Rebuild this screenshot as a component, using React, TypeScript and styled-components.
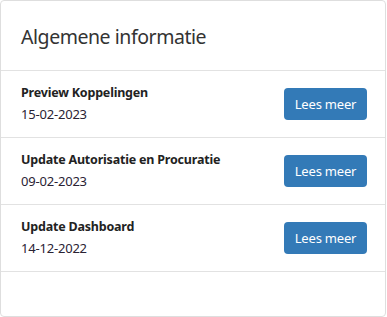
import styled, { createGlobalStyle } from "styled-components";

type NewsItem = {
  title: string
  date: string
}

const items: NewsItem[] = [
  { title: "Preview Koppelingen", date: "15-02-2023" },
  { title: "Update Autorisatie en Procuratie", date: "09-02-2023" },
  { title: "Update Dashboard", date: "14-12-2022" },
]

const GlobalStyle = createGlobalStyle`
  body{
    margin: 0;
    background: #fff;
    font-family: "Noto Sans", "Open Sans", sans-serif;
    color: #222;
  }
`

const App = () => {
  return (
    <>
      <GlobalStyle />
      <Card>
        <Header>
          <h2>Algemene informatie</h2>
        </Header>
        <List>
          {items.map(item => (
            <Row key={item.title}>
              <div>
                <Title>{item.title}</Title>
                <DateText>{item.date}</DateText>
              </div>
              <MoreButton>Lees meer</MoreButton>
            </Row>
          ))}
        </List>
      </Card>
    </>
  )
}
export default App

const Card = styled.section`
  width: 386px;
  height: 317px;
  box-sizing: border-box;
  border: 1px solid #dedede;
  border-radius: 4px;
  background: #fff;
  display: flex;
  flex-direction: column;
`

const Header = styled.header`
  height: 70px;
  box-sizing: border-box;
  padding: 2px 20px 0;
  display: flex;
  align-items: center;
  border-bottom: 1px solid #e2e2e2;

  h2{
    margin: 0;
    font-size: 19.5px;
    font-weight: 400;
    color: #333;
    letter-spacing: -0.45px;
  }
`

const List = styled.ul`
  list-style: none;
  margin: 0;
  padding: 0;
`

const Row = styled.li`
  height: 67px;
  box-sizing: border-box;
  padding: 0 18px 0 20px;
  display: flex;
  justify-content: space-between;
  align-items: center;
  border-bottom: 1px solid #e2e2e2;
`

const Title = styled.p`
  margin: 0;
  font-size: 12.5px;
  font-weight: 700;
  color: #222;
  line-height: 20px;
  letter-spacing: -0.2px;
`

const DateText = styled.p`
  margin: 0;
  font-size: 13px;
  color: #2a2233;
  line-height: 22px;
  letter-spacing: -0.2px;
`

const MoreButton = styled.button`
  width: 83px;
  height: 32px;
  border: none;
  border-radius: 4px;
  background-color: #337ab7;
  color: #fff;
  font-family: inherit;
  font-size: 13px;
  letter-spacing: -0.2px;
  cursor: pointer;
`
